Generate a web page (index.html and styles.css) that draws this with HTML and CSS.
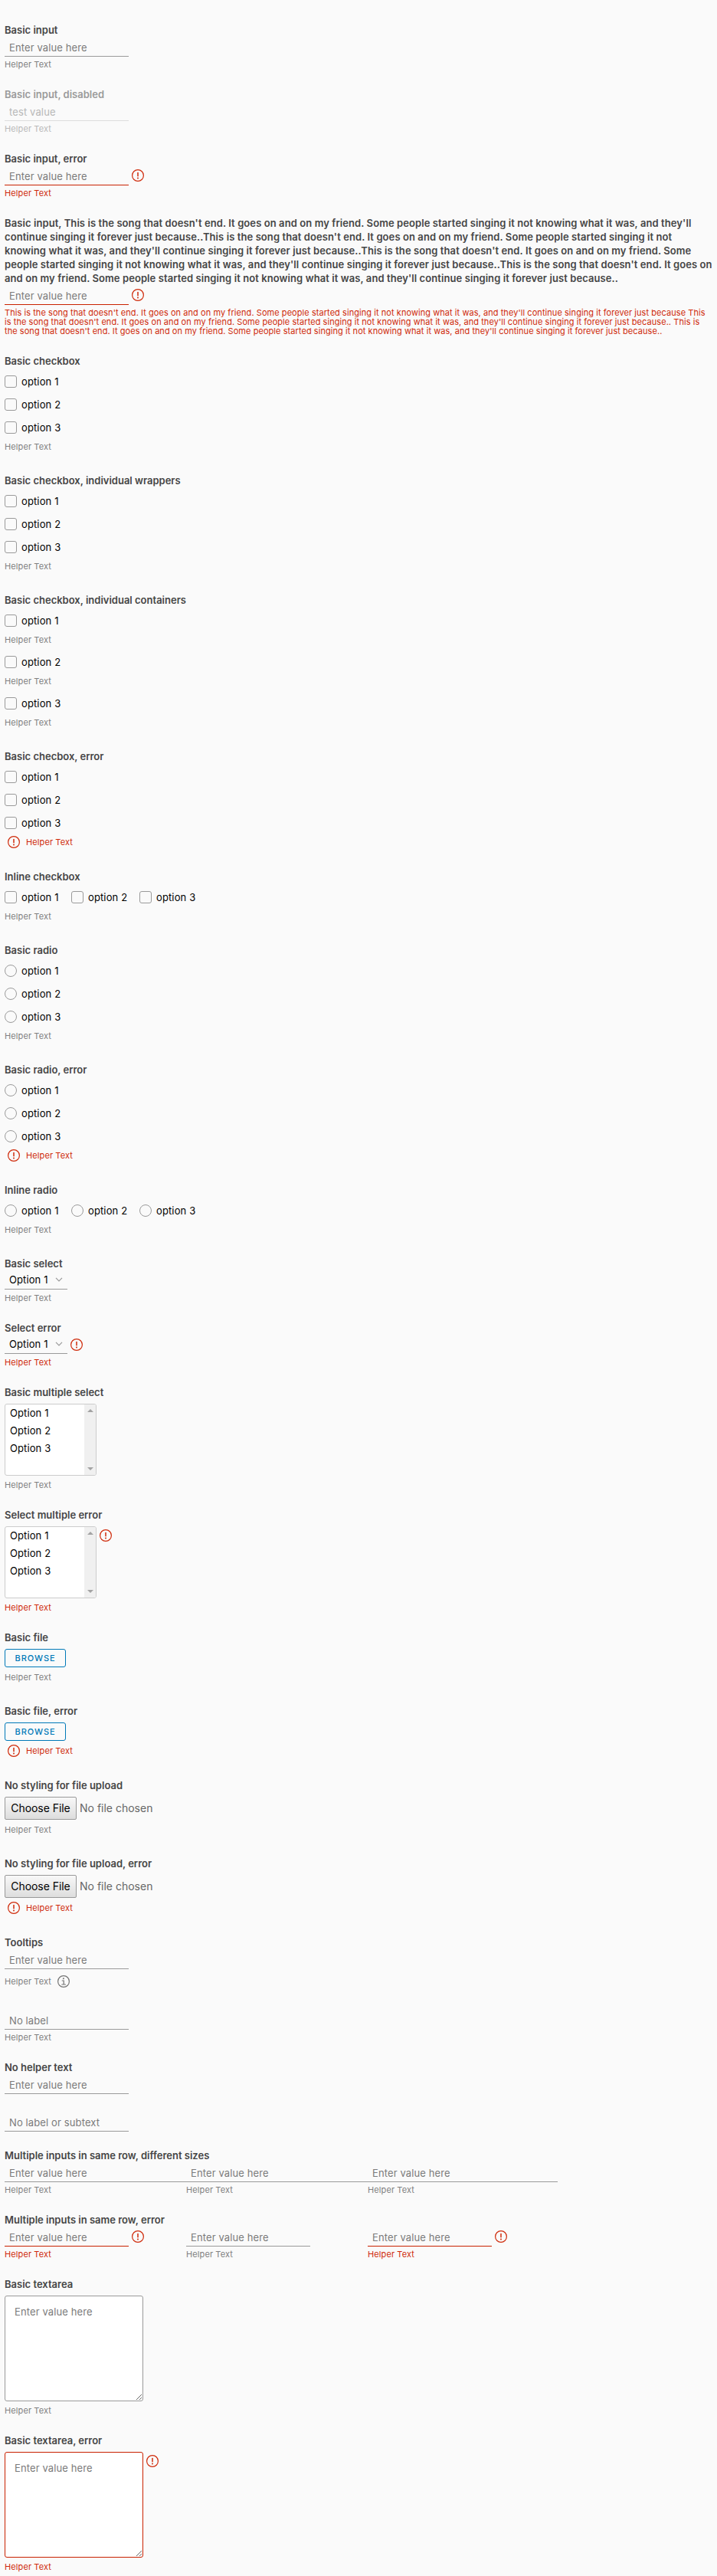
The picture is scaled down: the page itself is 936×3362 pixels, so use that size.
FILE: index.html
```html
<!DOCTYPE html>
<html lang="en">
<head>
<meta charset="utf-8">
<title>Forms</title>
<link rel="stylesheet" href="styles.css">
</head>
<body>
<svg class="defs" width="0" height="0">
  <symbol id="err" viewBox="0 0 16 16"><circle cx="8" cy="8" r="7.4" fill="none" stroke="currentColor" stroke-width="1.2"/><path d="M8 4.4v4.4" stroke="currentColor" stroke-width="1.5" stroke-linecap="round"/><circle cx="8" cy="11.5" r=".95" fill="currentColor"/></symbol>
  <symbol id="info" viewBox="0 0 16 16"><circle cx="8" cy="8" r="7.4" fill="none" stroke="currentColor" stroke-width="1.2"/><circle cx="7.9" cy="4.2" r="1" fill="currentColor"/><path d="M6.2 7h2v5M5.8 12h4.7" fill="none" stroke="currentColor" stroke-width="1.2" stroke-linecap="round"/></symbol>
  <symbol id="chev" viewBox="0 0 10 6"><path d="M1 .8l4 4 4-4" fill="none" stroke="#9a9a9a" stroke-width="1.2"/></symbol>
</svg>
<form class="form">
  <div class="group"><label class="label">Basic input</label><div class="field"><input class="input" placeholder="Enter value here"></div><span class="help">Helper Text</span></div>
  <div class="group disabled"><label class="label">Basic input, disabled</label><div class="field"><input class="input" value="test value" disabled></div><span class="help">Helper Text</span></div>
  <div class="group error"><label class="label">Basic input, error</label><div class="field"><input class="input" placeholder="Enter value here"><svg class="icon"><use href="#err"/></svg></div><span class="help">Helper Text</span></div>
  <div class="group error"><label class="label long">Basic input, This is the song that doesn't end. It goes on and on my friend. Some people started singing it not knowing what it was, and they'll<br>continue singing it forever just because..This is the song that doesn't end. It goes on and on my friend. Some people started singing it not<br>knowing what it was, and they'll continue singing it forever just because..This is the song that doesn't end. It goes on and on my friend. Some<br>people started singing it not knowing what it was, and they'll continue singing it forever just because..This is the song that doesn't end. It goes on<br>and on my friend. Some people started singing it not knowing what it was, and they'll continue singing it forever just because..</label><div class="field"><input class="input" placeholder="Enter value here"><svg class="icon"><use href="#err"/></svg></div><span class="help long">This is the song that doesn't end. It goes on and on my friend. Some people started singing it not knowing what it was, and they'll continue singing it forever just because This<br>is the song that doesn't end. It goes on and on my friend. Some people started singing it not knowing what it was, and they'll continue singing it forever just because.. This is<br>the song that doesn't end. It goes on and on my friend. Some people started singing it not knowing what it was, and they'll continue singing it forever just because..</span></div>

  <div class="group"><label class="label">Basic checkbox</label><div class="options"><label class="option"><i class="box"></i>option 1</label><label class="option"><i class="box"></i>option 2</label><label class="option"><i class="box"></i>option 3</label></div><span class="help choice">Helper Text</span></div>
  <div class="group"><label class="label">Basic checkbox, individual wrappers</label><div class="options"><label class="option"><i class="box"></i>option 1</label><label class="option"><i class="box"></i>option 2</label><label class="option"><i class="box"></i>option 3</label></div><span class="help choice">Helper Text</span></div>
  <div class="group"><label class="label">Basic checkbox, individual containers</label>
    <div class="options single"><label class="option"><i class="box"></i>option 1</label></div><span class="help choice">Helper Text</span>
    <div class="options single"><label class="option"><i class="box"></i>option 2</label></div><span class="help choice">Helper Text</span>
    <div class="options single"><label class="option"><i class="box"></i>option 3</label></div><span class="help choice">Helper Text</span></div>
  <div class="group error"><label class="label">Basic checbox, error</label><div class="options"><label class="option"><i class="box"></i>option 1</label><label class="option"><i class="box"></i>option 2</label><label class="option"><i class="box"></i>option 3</label></div><span class="help with-icon after-choice"><svg class="icon"><use href="#err"/></svg>Helper Text</span></div>
  <div class="group"><label class="label">Inline checkbox</label><div class="options inline"><label class="option"><i class="box"></i>option 1</label><label class="option"><i class="box"></i>option 2</label><label class="option"><i class="box"></i>option 3</label></div><span class="help choice">Helper Text</span></div>
  <div class="group"><label class="label">Basic radio</label><div class="options"><label class="option"><i class="box round"></i>option 1</label><label class="option"><i class="box round"></i>option 2</label><label class="option"><i class="box round"></i>option 3</label></div><span class="help choice">Helper Text</span></div>
  <div class="group error"><label class="label">Basic radio, error</label><div class="options"><label class="option"><i class="box round"></i>option 1</label><label class="option"><i class="box round"></i>option 2</label><label class="option"><i class="box round"></i>option 3</label></div><span class="help with-icon after-choice"><svg class="icon"><use href="#err"/></svg>Helper Text</span></div>
  <div class="group"><label class="label">Inline radio</label><div class="options inline"><label class="option"><i class="box round"></i>option 1</label><label class="option"><i class="box round"></i>option 2</label><label class="option"><i class="box round"></i>option 3</label></div><span class="help choice">Helper Text</span></div>

  <div class="group"><label class="label">Basic select</label><div class="field"><div class="select">Option 1<svg class="chev"><use href="#chev"/></svg></div></div><span class="help">Helper Text</span></div>
  <div class="group error"><label class="label">Select error</label><div class="field"><div class="select">Option 1<svg class="chev"><use href="#chev"/></svg></div><svg class="icon"><use href="#err"/></svg></div><span class="help">Helper Text</span></div>
  <div class="group"><label class="label">Basic multiple select</label><div class="block"><div class="list"><div class="items"><span>Option 1</span><span>Option 2</span><span>Option 3</span></div><div class="bar"><i class="up"></i><i class="down"></i></div></div></div><span class="help below">Helper Text</span></div>
  <div class="group error"><label class="label">Select multiple error</label><div class="block"><div class="list"><div class="items"><span>Option 1</span><span>Option 2</span><span>Option 3</span></div><div class="bar"><i class="up"></i><i class="down"></i></div></div><svg class="icon"><use href="#err"/></svg></div><span class="help below">Helper Text</span></div>

  <div class="group"><label class="label">Basic file</label><div class="block"><button type="button" class="browse">BROWSE</button></div><span class="help roomy">Helper Text</span></div>
  <div class="group error"><label class="label">Basic file, error</label><div class="block"><button type="button" class="browse">BROWSE</button></div><span class="help with-icon"><svg class="icon"><use href="#err"/></svg>Helper Text</span></div>
  <div class="group"><label class="label">No styling for file upload</label><div class="block"><button type="button" class="choose">Choose File</button><span class="chosen">No file chosen</span></div><span class="help roomy">Helper Text</span></div>
  <div class="group error"><label class="label">No styling for file upload, error</label><div class="block"><button type="button" class="choose">Choose File</button><span class="chosen">No file chosen</span></div><span class="help with-icon"><svg class="icon"><use href="#err"/></svg>Helper Text</span></div>

  <div class="group"><label class="label">Tooltips</label><div class="field"><input class="input" placeholder="Enter value here"></div><span class="help tip">Helper Text<svg class="icon"><use href="#info"/></svg></span></div>
  <div class="group"><div class="field bare"><input class="input" placeholder="No label"></div><span class="help">Helper Text</span></div>
  <div class="group"><label class="label">No helper text</label><div class="field"><input class="input" placeholder="Enter value here"></div></div>
  <div class="group"><div class="field alone"><input class="input" placeholder="No label or subtext"></div></div>
  <div class="group tight"><label class="label">Multiple inputs in same row, different sizes</label><div class="columns">
    <div class="column"><div class="field"><input class="input wide" placeholder="Enter value here"></div><span class="help">Helper Text</span></div>
    <div class="column"><div class="field"><input class="input wide" placeholder="Enter value here"></div><span class="help">Helper Text</span></div>
    <div class="column"><div class="field"><input class="input wider" placeholder="Enter value here"></div><span class="help">Helper Text</span></div></div></div>
  <div class="group"><label class="label">Multiple inputs in same row, error</label><div class="columns">
    <div class="column error"><div class="field"><input class="input" placeholder="Enter value here"><svg class="icon"><use href="#err"/></svg></div><span class="help">Helper Text</span></div>
    <div class="column"><div class="field"><input class="input" placeholder="Enter value here"></div><span class="help">Helper Text</span></div>
    <div class="column error"><div class="field"><input class="input" placeholder="Enter value here"><svg class="icon"><use href="#err"/></svg></div><span class="help">Helper Text</span></div></div></div>
  <div class="group"><label class="label">Basic textarea</label><div class="block"><textarea class="area" placeholder="Enter value here"></textarea></div><span class="help below">Helper Text</span></div>
  <div class="group error"><label class="label">Basic textarea, error</label><div class="block"><textarea class="area" placeholder="Enter value here"></textarea><svg class="icon"><use href="#err"/></svg></div><span class="help below">Helper Text</span></div>
</form>
</body>
</html>
```
FILE: styles.css
```css
* { box-sizing: border-box; }
body { margin: 0; padding: 6px 0 0 6px; height: 3362px; overflow: hidden; background: #fafafa; font-family: Metropolis, Inter, sans-serif; font-size: 13px; color: #000; }
.defs { position: absolute; }
.form { display: flex; flex-direction: column; }
.group { display: flex; flex-direction: column; padding-top: 24px; }
.group.tight { padding-top: 22px; }
.label { font-size: 13px; line-height: 18px; font-weight: 600; color: #454545; white-space: nowrap; }
.label.long { letter-spacing: .083px; }
.disabled .label { color: #9a9a9a; }
.field { display: flex; height: 24px; margin-top: 2px; }
.field.bare { margin-top: 4px; }
.field.alone { margin-top: 1px; }
.input { flex: none; width: 162px; height: 24px; margin: 0; padding: 0 6px; border: 0; border-bottom: 1px solid #9a9a9a; border-radius: 0; outline: 0; background: none; font: inherit; letter-spacing: .12px; color: #000; }
.input.wide { width: 237px; }
.input.wider { width: 248px; }
.input::placeholder, .area::placeholder { color: #7b7b7b; opacity: 1; }
.input:disabled { color: #b8b8b8; border-color: #ddd; }
.error .input { border-color: #c92100; }
.icon { width: 16px; height: 16px; flex: none; color: #cf2a0a; margin: 3px 0 0 4px; }
.help { margin-top: 4px; font-size: 11px; line-height: 12px; letter-spacing: .1px; color: #808080; white-space: nowrap; }
.help.long { letter-spacing: .058px; }
.disabled .help { color: #b9b9b9; }
.error .help { color: #cf2a0a; }
.options { display: flex; flex-direction: column; gap: 14px; padding-top: 10px; }
.option { display: flex; align-items: center; gap: 6px; height: 16px; line-height: 16px; letter-spacing: .12px; }
.options.inline { flex-direction: row; gap: 0; }
.inline .option { width: 87px; }
.inline .option + .option { width: 89px; }
.box { width: 16px; height: 16px; border: 1px solid #9a9a9a; border-radius: 3px; }
.box.round { border-radius: 50%; }
.help.choice { margin: 11px 0 5px; }
.help.with-icon { display: flex; align-items: center; height: 16px; margin: 5px 0 4px; }
.help.after-choice { margin: 9px 0 4px; }
.with-icon .icon { margin: 0 8px 0 4px; }
.select { display: flex; align-items: center; justify-content: space-between; width: 82px; height: 24px; padding: 0 6px 1px; border-bottom: 1px solid #9a9a9a; margin-top: -1px; letter-spacing: .1px; }
.select { height: 24px; }
.chev { width: 10px; height: 6px; margin-bottom: 1px; }
.block { display: flex; align-items: flex-start; margin-top: 6px; }
.block .icon { margin-top: 4px; }
.list { display: flex; justify-content: space-between; width: 120px; height: 94px; border: 1px solid #ccc; border-radius: 3px; background: #fff; overflow: hidden; }
.items { display: flex; flex-direction: column; padding-left: 6px; line-height: 23px; letter-spacing: .1px; }
.bar { display: flex; flex-direction: column; justify-content: space-between; align-items: center; width: 15px; padding: 6px 0; background: #f0f0f0; }
.up, .down { border: 4px solid transparent; }
.up { border-top: 0; border-bottom-color: #a3a3a3; }
.down { border-bottom: 0; border-top-color: #a3a3a3; }
.help.below { margin-top: 6px; }
.help.roomy { margin: 7px 0 5px; }
.browse { width: 80px; height: 24px; padding: 0; border: 1px solid #0079b8; border-radius: 3px; background: none; color: #0079b8; font: 500 11px/22px Metropolis, Inter, sans-serif; letter-spacing: .9px; }
.choose { width: 94px; height: 30px; padding: 0; border: 1px solid #999; border-radius: 2px; background: linear-gradient(#f8f8f8, #ddd); color: #000; font: 14px/28px Metropolis, Inter, sans-serif; letter-spacing: -.05px; }
.chosen { margin-left: 4px; font-size: 14px; line-height: 30px; color: #666; }
.help.tip { display: flex; align-items: center; height: 16px; margin: 8px 0 3px; }
.tip .icon { margin: 0 0 0 8px; color: #747474; }
.columns { display: flex; }
.column { display: flex; flex-direction: column; flex: none; width: 237px; }
.area { display: block; width: 181px; height: 138px; margin: 0; padding: 11px 12px; border: 1px solid #9a9a9a; border-radius: 3px; background: #fff; outline: 0; font: 13px/18px Metropolis, Inter, sans-serif; letter-spacing: .12px; resize: both; }
.error .area { border-color: #c92100; }
```
